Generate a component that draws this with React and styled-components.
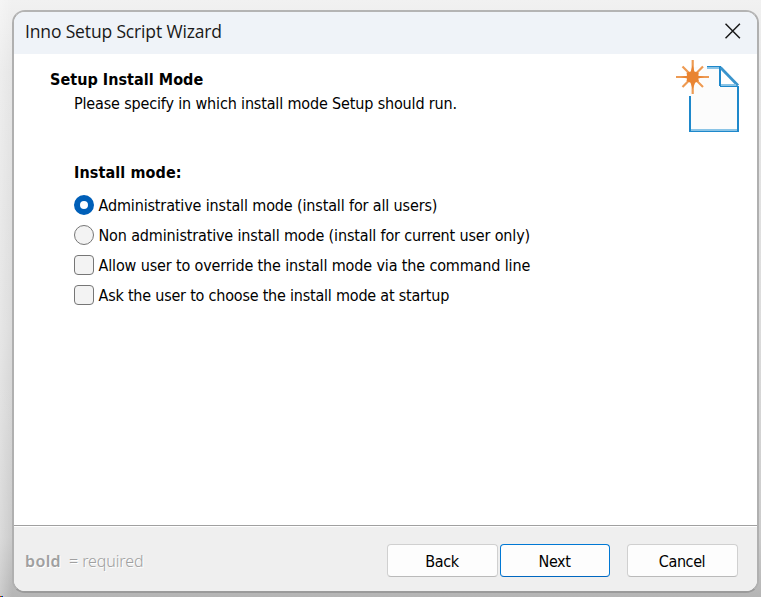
import React from "react";
import styled, { createGlobalStyle } from "styled-components";

const GlobalStyle = createGlobalStyle`
  *, *::before, *::after { box-sizing: border-box; }
  body { margin: 0; background: #d8d8d8; overflow: hidden; }
`;

const Desktop = styled.div`
  width: 761px;
  height: 597px;
  padding: 10px 2px 4px 12px;
  background:
    linear-gradient(90deg, #e00 0 1px, #0a0 1px 2px, #00e 2px) 0 100% / 3px 1px no-repeat,
    linear-gradient(90deg, rgba(255, 255, 255, 0.3), rgba(255, 255, 255, 0) 12px) 0 0 / 12px 100% no-repeat,
    linear-gradient(180deg, #f1f1f1 0, #e6e6e6 12%, #dcdcdc 55%, #cbcbcb 90%, #b5b5b5 100%);
  font-family: "DejaVu Sans Condensed", "Noto Sans", sans-serif;
  font-size: 16px;
  color: #000;
`;

const Window = styled.main`
  width: 747px;
  height: 583px;
  display: flex;
  flex-direction: column;
  border: 2px solid #b0b0b0;
  border-top-color: #b4b4b4;
  border-bottom-color: #9b9b9b;
  border-radius: 13px;
  overflow: hidden;
  background: #fff;
`;

const TitleBar = styled.header`
  height: 42px;
  flex: none;
  display: flex;
  align-items: center;
  justify-content: space-between;
  padding: 0 16px 4px 11px;
  background: #eff3f8;
`;

const Title = styled.h1`
  margin: 0;
  font: 400 17.5px/24px "Open Sans", sans-serif;
  letter-spacing: ${(p) => p.$spacing}px;
  color: #191919;
`;

const IconButton = styled.button`
  display: flex;
  padding: 0;
  border: 0;
  background: none;
`;

const Heading = styled.div`
  height: 87px;
  display: flex;
  justify-content: space-between;
  padding: 5px 17px 0 36px;
`;

const HeadingText = styled.div`
  padding-top: 9px;
`;

const Line = styled.div`
  height: 24px;
  line-height: 24px;
  padding-left: ${(p) => p.$indent || 0}px;
  font-weight: ${(p) => (p.$bold ? 700 : 400)};
  letter-spacing: ${(p) => p.$spacing || 0}px;
  white-space: nowrap;
`;

const Options = styled.section`
  flex: 1;
  padding: 20px 0 0 60px;
`;

const OptionList = styled.div`
  padding-top: 5px;
`;

const Option = styled.div`
  height: 30px;
  display: flex;
  align-items: center;
  gap: 4px;
`;

const OptionLabel = styled(Line)`
  padding: 1px 0 0 0.5px;
`;

const Mark = styled.span`
  width: 20px;
  height: 20px;
  flex: none;
  border: ${(p) => (p.$checked ? "6px solid #005fb8" : "1px solid #767676")};
  border-radius: ${(p) => (p.$round ? "50%" : "4px")};
  background: ${(p) => (p.$checked ? "#fff" : "#f3f3f3")};
`;

const Footer = styled.footer`
  height: 66px;
  flex: none;
  display: flex;
  align-items: center;
  padding: 3px 19px 0 11px;
  border-top: 1px solid #a0a0a0;
  box-shadow: inset 0 1px #fff;
  background: #efefef;
`;

const Legend = styled.div`
  flex: 1;
  display: flex;
  gap: 8px;
  padding-top: 2px;
  color: #a0a0a0;
  text-shadow: 1px 1px #fff;
  font: 400 16px/24px "Noto Sans", sans-serif;
`;

const Required = styled.span`
  font-weight: ${(p) => (p.$bold ? 600 : 300)};
  letter-spacing: ${(p) => p.$spacing}px;
`;

const Button = styled.button`
  width: ${(p) => p.$width}px;
  height: 33px;
  margin-left: ${(p) => p.$gap || 0}px;
  padding: 2px 1px 0 0;
  border: 1px solid ${(p) => (p.$primary ? "#0078d4" : "#d0d0d0")};
  border-bottom-color: ${(p) => (p.$primary ? "#0067c0" : "#bababa")};
  border-radius: 4px;
  background: #fdfdfd;
  font: inherit;
  letter-spacing: -0.4px;
  color: #000;
`;

const options = [
  { label: "Administrative install mode (install for all users)", round: true, checked: true, spacing: -0.14 },
  { label: "Non administrative install mode (install for current user only)", round: true, spacing: -0.15 },
  { label: "Allow user to override the install mode via the command line", spacing: -0.14 },
  { label: "Ask the user to choose the install mode at startup", spacing: -0.21 },
];

const CloseIcon = () => (
  <svg width="16" height="16" viewBox="0 0 16 16" fill="none" stroke="#191919" strokeWidth="1.5">
    <path d="M.5.8 14.9 15.2M14.9.8.5 15.2" />
  </svg>
);

const NewScriptIcon = () => (
  <svg width="64" height="74" viewBox="676 59 64 74" fill="none">
    <path d="M690 100V67H720L738 86V131H690Z" fill="#fcfcfc" />
    <path d="M720 67V86H738Z" fill="#fff" />
    <path d="M690 96V131" stroke="#1e88cb" strokeWidth="2" />
    <path d="M738 86V131" stroke="#1e88cb" strokeWidth="2" />
    <path d="M691 130H737" stroke="#8ac4e6" strokeWidth="2" />
    <path d="M689 131.5H739" stroke="#1e88cb" />
    <path d="M707 66.5H721" stroke="#1e88cb" />
    <path d="M707 68H720" stroke="#8ac4e6" strokeWidth="2" />
    <path d="M720 67V86" stroke="#1e88cb" strokeWidth="2" />
    <path d="M720.5 67.5 738 85.5" stroke="#3a94cc" strokeWidth="2.8" />
    <path d="M721 85H736" stroke="#8ac4e6" strokeWidth="2" />
    <path d="M720 86.5H739" stroke="#1e88cb" />
    <path d="M682.5 66.5 703 87M703 66.5 682.5 87" stroke="#fff" strokeWidth="5" />
    <path d="M682.5 66.5 703 87M703 66.5 682.5 87" stroke="#ee9a52" strokeWidth="2.2" />
    <path d="M692.7 60V94M676 77H709" stroke="#ed9b54" strokeWidth="2.2" />
    <path d="m692.7 65 1.7 6.6 4.4 1.2-.5 3 6.2 1.2-6.2 1.4.6 2.7-3.8 1.7-2.4 6.5-2.2-6.5-4-1.7.6-2.7-6.2-1.4 6.2-1.2-.6-3 4.2-1.2Z" fill="#e98432" />
  </svg>
);

export default function App() {
  return (
    <>
      <GlobalStyle />
      <Desktop>
        <Window>
          <TitleBar>
            <Title $spacing={-0.15}>Inno Setup Script Wizard</Title>
            <IconButton aria-label="Close"><CloseIcon /></IconButton>
          </TitleBar>
          <Heading>
            <HeadingText>
              <Line $bold $spacing={0.04}>Setup Install Mode</Line>
              <Line $indent={24} $spacing={-0.155}>Please specify in which install mode Setup should run.</Line>
            </HeadingText>
            <NewScriptIcon />
          </Heading>
          <Options>
            <Line $bold $spacing={0.1}>Install mode:</Line>
            <OptionList>
              {options.map((o) => (
                <Option key={o.label}>
                  <Mark $round={o.round} $checked={o.checked} />
                  <OptionLabel $spacing={o.spacing}>{o.label}</OptionLabel>
                </Option>
              ))}
            </OptionList>
          </Options>
          <Footer>
            <Legend>
              <Required $bold $spacing={0.4}>bold</Required>
              <Required $spacing={-0.1}>= required</Required>
            </Legend>
            <Button $width={111}>Back</Button>
            <Button $width={110} $gap={2} $primary>Next</Button>
            <Button $width={111} $gap={17}>Cancel</Button>
          </Footer>
        </Window>
      </Desktop>
    </>
  );
}
